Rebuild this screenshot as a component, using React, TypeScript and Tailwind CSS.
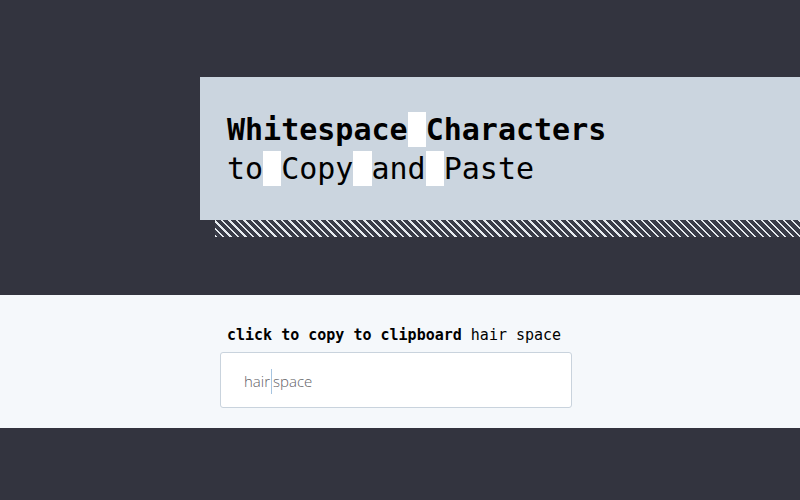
import React from "react";

const mono = "font-['DejaVu_Sans_Mono',monospace]";

// one highlighted whitespace cell inside the title
const Gap = () => <span className="bg-white"> </span>;

export default function App() {
  return (
    <div className="min-h-[500px] w-[800px] bg-[#33343f]">
      {/* header */}
      <div className="pt-[77px] pb-[58px]">
        <div className="ml-[200px]">
          <div className="h-[143px] bg-[#cbd5df] pl-[27px] pt-[33px]">
            <h1 className={`${mono} text-[30px] leading-[39px] text-black`}>
              <span className="font-bold">
                Whitespace
                <Gap />
                Characters
              </span>
              <br />
              <span>
                to
                <Gap />
                Copy
                <Gap />
                and
                <Gap />
                Paste
              </span>
            </h1>
          </div>
          <div className="ml-[15px] h-[17px] bg-[image:repeating-linear-gradient(45deg,#e5e9ee_0_1.6px,#3a3c48_1.6px_5.3px)]" />
        </div>
      </div>

      {/* copy box */}
      <div className="h-[133px] bg-[#f5f8fb] pt-[30px]">
        <div className="ml-[220px] w-[352px]">
          <p className={`${mono} pl-[7px] text-[15px] leading-[20px] text-black`}>
            <span className="font-bold">click to copy to clipboard</span> hair space
          </p>
          <div className="mt-[7px] flex h-[56px] items-center rounded-[3px] border border-[#c9d3dd] bg-white pl-[23px] pt-[3px] font-['Open_Sans',sans-serif] text-[15px] font-light text-[#5f6166]">
            <span>hair</span>
            <span className="mx-[1px] inline-block h-[25px] w-px bg-[#a6c4e0]" />
            <span>space</span>
          </div>
        </div>
      </div>
    </div>
  );
}
